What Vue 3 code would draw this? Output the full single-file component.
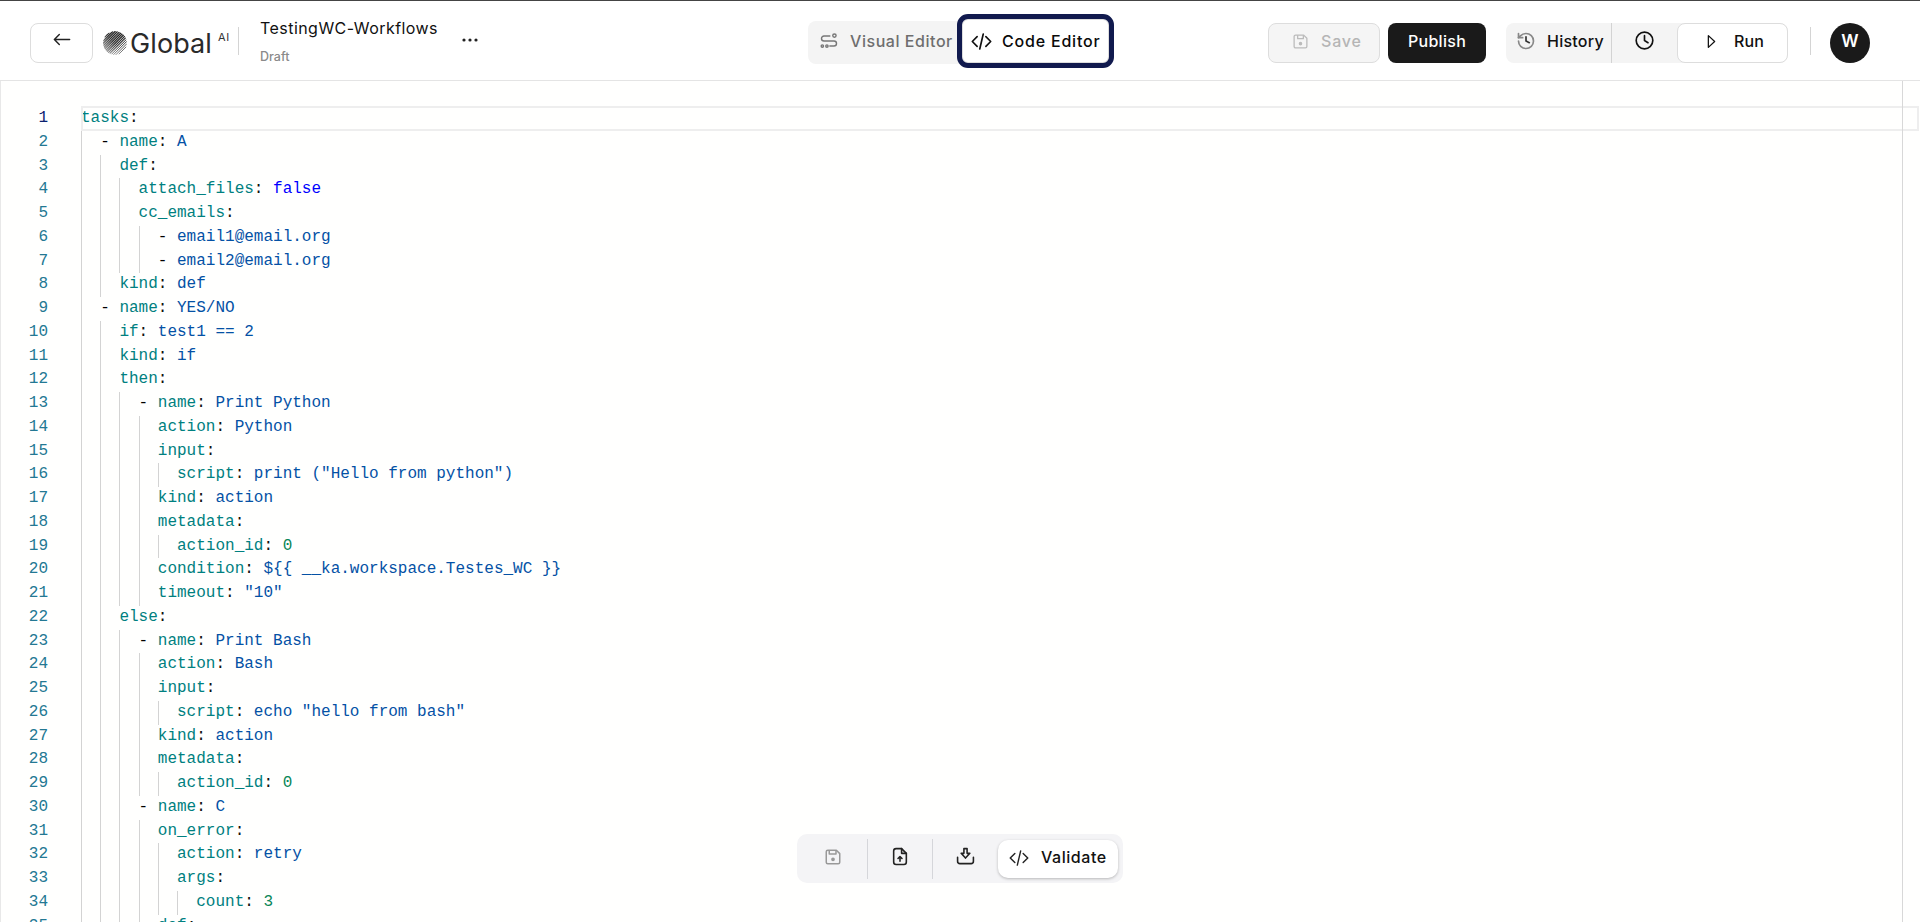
<script setup>
const source = `tasks:
  - name: A
    def:
      attach_files: false
      cc_emails:
        - email1@email.org
        - email2@email.org
    kind: def
  - name: YES/NO
    if: test1 == 2
    kind: if
    then:
      - name: Print Python
        action: Python
        input:
          script: print ("Hello from python")
        kind: action
        metadata:
          action_id: 0
        condition: \${{ __ka.workspace.Testes_WC }}
        timeout: "10"
    else:
      - name: Print Bash
        action: Bash
        input:
          script: echo "hello from bash"
        kind: action
        metadata:
          action_id: 0
      - name: C
        on_error:
          action: retry
          args:
            count: 3
        def:`

const colWidth = 9.6

const lines = source.split('\n').map((text, i) => {
  const m = text.match(/^( *)(- )?([^:]*:)?(.*)$/)
  const indent = m[1].length
  const raw = (m[4] || '').trim()
  let kind = 'str'
  if (/^\d+$/.test(raw)) kind = 'num'
  else if (/^(true|false)$/.test(raw)) kind = 'bool'
  const guides = []
  for (let g = 0; g < Math.floor(indent / 2); g++) guides.push(g * 2 * colWidth)
  return {
    n: i + 1,
    lead: m[1],
    dash: m[2] || '',
    key: m[3] ? m[3].slice(0, -1) + ':' : '',
    value: raw,
    kind,
    guides
  }
})

// hatch strokes of the logo orb: "/" diagonals, one every 1.7 units
const hatch = []
for (let d = -11.5; d <= 11.5; d += 1.7) {
  const half = Math.sqrt(144 - d * d)
  const c = 12 + d * Math.SQRT1_2
  const e = 12 + d * Math.SQRT1_2
  hatch.push({
    x1: c - half * Math.SQRT1_2,
    y1: e + half * Math.SQRT1_2,
    x2: c + half * Math.SQRT1_2,
    y2: e - half * Math.SQRT1_2,
    w: 1.35 - Math.max(0, (d + 11.5) / 23 - 0.45) * 1.3
  })
}
</script>

<template>
  <div class="page">
    <header class="top">
      <div class="left">
        <button class="back" aria-label="Back">
          <svg viewBox="0 0 20 14" width="18" height="13" fill="none" stroke="#222" stroke-width="1.6" stroke-linecap="round" stroke-linejoin="round"><path d="M18.5 7H1.5M7 1.5 1.5 7 7 12.5"/></svg>
        </button>
        <div class="logo">
          <svg class="orb" viewBox="0 0 24 24" width="24" height="24">
            <defs>
              <linearGradient id="fade" x1="0.85" y1="0.15" x2="0.15" y2="0.85">
                <stop offset="0" stop-color="#fff"/>
                <stop offset="0.5" stop-color="#eee"/>
                <stop offset="1" stop-color="#777"/>
              </linearGradient>
              <mask id="orbmask"><circle cx="12" cy="12" r="12" fill="url(#fade)"/></mask>
            </defs>
            <g mask="url(#orbmask)" stroke="#222">
              <line v-for="(h, i) in hatch" :key="i" :x1="h.x1" :y1="h.y1" :x2="h.x2" :y2="h.y2" :stroke-width="h.w"/>
            </g>
          </svg>
          <span class="word">Global</span><sup class="ai">AI</sup>
        </div>
        <span class="vr logo-vr"></span>
        <div class="title">
          <div class="name">TestingWC-Workflows</div>
          <div class="draft">Draft</div>
        </div>
        <svg class="dots" viewBox="0 0 16 4" width="16" height="4" fill="#222"><circle cx="2" cy="2" r="1.6"/><circle cx="8" cy="2" r="1.6"/><circle cx="14" cy="2" r="1.6"/></svg>
      </div>

      <div class="center">
        <div class="seg">
          <button class="seg-btn">
            <svg viewBox="0 0 24 24" width="20" height="20" fill="none" stroke="#777" stroke-width="1.7" stroke-linecap="round"><path d="M13 6H6a3 3 0 0 0 0 6h12a3 3 0 0 1 0 6h-5"/><circle cx="18.5" cy="5.5" r="2"/><circle cx="4" cy="18" r="1.4"/><circle cx="9.5" cy="18" r="1.4"/></svg>
            <span>Visual Editor</span>
          </button>
          <button class="seg-btn active">
            <svg viewBox="0 0 24 24" width="21" height="21" fill="none" stroke="#111" stroke-width="1.9" stroke-linecap="round" stroke-linejoin="round"><path d="M7 6.5 1.5 12 7 17.5M17 6.5l5.5 5.5-5.5 5.5M14 3.5l-4 17"/></svg>
            <span>Code Editor</span>
          </button>
        </div>
      </div>

      <div class="right">
        <button class="save">
          <svg viewBox="0 0 24 24" width="17" height="17" fill="none" stroke="#bbb" stroke-width="1.8" stroke-linejoin="round"><path d="M5 3h11.5L21 7.5V19a2 2 0 0 1-2 2H5a2 2 0 0 1-2-2V5a2 2 0 0 1 2-2z"/><path d="M8 3v5h8V3"/><circle cx="12" cy="15" r="1.6" fill="#bbb"/></svg>
          <span>Save</span>
        </button>
        <button class="publish">Publish</button>
        <div class="runbar">
          <button class="hist">
            <svg viewBox="0 0 24 24" width="20" height="20" fill="none" stroke="#888" stroke-width="2" stroke-linecap="round" stroke-linejoin="round"><path d="M3 12a9 9 0 1 0 9-9 9.75 9.75 0 0 0-6.74 2.74L3 8"/><path d="M3 3v5h5"/><path d="M12 7v5l4 2" stroke="#333"/></svg>
            <span>History</span>
          </button>
          <button class="clock" aria-label="Schedule">
            <svg viewBox="0 0 24 24" width="21" height="21" fill="none" stroke="#111" stroke-width="1.9" stroke-linecap="round" stroke-linejoin="round"><circle cx="12" cy="12" r="9.5"/><path d="M12 6.5V12l4 2.5"/></svg>
          </button>
          <button class="run">
            <svg viewBox="0 0 10 16" width="9" height="15" fill="none" stroke="#111" stroke-width="1.4" stroke-linejoin="round"><path d="M1.5 1.5 8.5 8l-7 6.5z"/></svg>
            <span>Run</span>
          </button>
        </div>
        <span class="vr run-vr"></span>
        <div class="avatar">W</div>
      </div>
    </header>

    <main class="editor">
      <div v-for="l in lines" :key="l.n" class="row" :class="{ current: l.n === 1 }">
        <span class="num">{{ l.n }}</span>
        <span class="code">
          <i v-for="g in l.guides" :key="g" class="guide" :style="{ left: g + 'px' }"></i>
          <span>{{ l.lead + l.dash }}</span><span v-if="l.key" class="t-key">{{ l.key.slice(0, -1) }}</span><span v-if="l.key" class="t-dash">{{ ':' + (l.value ? ' ' : '') }}</span><span :class="'t-' + l.kind">{{ l.value }}</span>
        </span>
      </div>
      <div class="ruler"></div>

      <div class="tools">
        <button class="tool first">
          <svg viewBox="0 0 24 24" width="18" height="18" fill="none" stroke="#999" stroke-width="2" stroke-linejoin="round"><path d="M5 3h11.5L21 7.5V19a2 2 0 0 1-2 2H5a2 2 0 0 1-2-2V5a2 2 0 0 1 2-2z"/><path d="M7 3v5h9V3"/><circle cx="12" cy="15" r="1.5" fill="#999"/></svg>
        </button>
        <span class="tool-vr"></span>
        <button class="tool">
          <svg viewBox="0 0 20 24" width="16" height="19" fill="none" stroke="#222" stroke-width="2" stroke-linecap="round" stroke-linejoin="round"><path d="M12 2H5a3 3 0 0 0-3 3v14a3 3 0 0 0 3 3h10a3 3 0 0 0 3-3V8z"/><path d="M12 2v6h6"/><path d="M10 18v-6M7.5 14.5 10 12l2.5 2.5"/></svg>
        </button>
        <span class="tool-vr"></span>
        <button class="tool">
          <svg viewBox="0 0 24 24" width="19" height="19" fill="none" stroke="#222" stroke-width="2" stroke-linecap="round" stroke-linejoin="round"><path d="M10 2h4v6h3.5L12 14 6.5 8H10z"/><path d="M2 13v5a3 3 0 0 0 3 3h14a3 3 0 0 0 3-3v-5"/></svg>
        </button>
        <button class="validate">
          <svg viewBox="0 0 24 24" width="20" height="20" fill="none" stroke="#222" stroke-width="1.7" stroke-linecap="round" stroke-linejoin="round"><path d="M7 6.5 1.5 12 7 17.5M17 6.5l5.5 5.5-5.5 5.5M14 3.5l-4 17"/></svg>
          <span>Validate</span>
        </button>
      </div>
    </main>
  </div>
</template>

<style>
html, body { margin: 0; background: #fff; }
</style>

<style scoped>
.page {
  height: 922px;
  overflow: hidden;
  display: flex;
  flex-direction: column;
  font-family: Inter, "Noto Sans", sans-serif;
  color: #111;
  background: #fff;
}
button {
  font: inherit;
  color: inherit;
  border: 0;
  background: none;
  padding: 0;
  display: inline-flex;
  align-items: center;
}

.top {
  box-sizing: border-box;
  height: 81px;
  flex: none;
  padding-top: 4px;
  border-top: 1px solid #444;
  border-bottom: 1px solid #e4e4e4;
  display: grid;
  grid-template-columns: 808px 460px 1fr;
  align-items: center;
}
.left { display: flex; align-items: center; padding-left: 30px; }
.back {
  box-sizing: border-box;
  width: 63px;
  height: 40px;
  padding-bottom: 6px;
  justify-content: center;
  border: 1px solid #ddd;
  border-radius: 8px;
}
.logo { display: flex; align-items: center; margin-left: 10px; width: 135px; }
.orb { flex: none; }
.word { font-size: 27px; color: #2a2a2a; margin: 2px 0 0 3px; letter-spacing: .1px; line-height: 1; }
.ai { font-size: 11px; letter-spacing: .6px; margin: -10px 0 0 6px; color: #333; line-height: 1; }
.vr { width: 1px; height: 28px; background: #d4d4d4; flex: none; }
.logo-vr { margin-bottom: 3px; }
.title { margin: 0 0 3px 21px; width: 202px; }
.name { font-size: 16px; line-height: 20px; letter-spacing: .45px; }
.draft { font-size: 12.5px; line-height: 16px; margin-top: 11px; color: #8a8a8a; font-weight: 500; }
.dots { flex: none; margin-bottom: 6px; }

.center { display: flex; }
.seg {
  display: flex;
  align-items: center;
  height: 43px;
  width: 301px;
  background: #f4f4f4;
  border-radius: 8px;
}
.seg-btn {
  height: 43px;
  padding-bottom: 3px;
  font-size: 16px;
  font-weight: 450;
  letter-spacing: .55px;
  color: #6e6e6e;
  gap: 11px;
  padding-left: 11px;
  white-space: nowrap;
  box-sizing: border-box;
}
.seg-btn:first-child { width: 154px; }
.seg-btn.active {
  align-self: flex-start;
  margin-top: -2px;
  width: 147px;
  height: 44px;
  padding-bottom: 0;
  padding-left: 8px;
  letter-spacing: .8px;
  color: #0a0a0a;
  background: #fff;
  border-radius: 6px;
  border: 1px solid #ddd;
  outline: 5px solid #111a4e;
  gap: 10px;
}

.right { display: flex; align-items: center; padding-left: 0; }
.save {
  box-sizing: border-box;
  width: 112px;
  height: 40px;
  padding: 0 0 3px 23px;
  gap: 12px;
  border: 1px solid #ddd;
  border-radius: 8px;
  background: #f5f5f5;
  color: #b5b5b5;
  font-size: 16px;
  letter-spacing: .8px;
  font-weight: 450;
}
.publish {
  box-sizing: border-box;
  width: 98px;
  height: 40px;
  padding-bottom: 3px;
  margin-left: 8px;
  justify-content: center;
  background: #1a1a1a;
  color: #fff;
  border-radius: 8px;
  font-size: 16px;
  letter-spacing: .3px;
  font-weight: 550;
}
.runbar {
  display: flex;
  align-items: center;
  height: 40px;
  width: 282px;
  margin-left: 20px;
  background: #f4f4f4;
  border-radius: 8px;
}
.hist {
  box-sizing: border-box;
  width: 106px;
  height: 40px;
  padding: 0 0 3px 10px;
  gap: 11px;
  border-right: 1px solid #d3d3d3;
  font-size: 16px;
  letter-spacing: .25px;
  font-weight: 450;
}
.clock { box-sizing: border-box; width: 65px; height: 40px; padding-bottom: 5px; justify-content: center; }
.run {
  box-sizing: border-box;
  flex: 1;
  height: 40px;
  padding: 0 0 3px 29px;
  gap: 18px;
  background: #fff;
  border: 1px solid #ddd;
  border-radius: 8px;
  font-size: 16px;
  letter-spacing: .1px;
  font-weight: 450;
}
.run-vr { margin: 0 0 3px 22px; }
.avatar {
  box-sizing: border-box;
  width: 40px;
  height: 40px;
  padding-bottom: 3px;
  margin-left: 19px;
  border-radius: 50%;
  background: #1a1a1a;
  color: #fff;
  display: flex;
  align-items: center;
  justify-content: center;
  font-size: 17px;
  font-weight: 600;
}

.editor {
  position: relative;
  flex: 1;
  min-height: 0;
  overflow: hidden;
  box-sizing: border-box;
  padding-top: 26px;
  border-left: 1px solid #e8e8e8;
  background: #fffffe;
  font-family: "Liberation Mono", monospace;
  font-size: 16px;
  line-height: 23.76px;
}
.row { display: flex; height: 23.76px; }
.num {
  flex: none;
  width: 47px;
  margin-right: 33px;
  text-align: right;
  color: #237893;
}
.current .num { color: #0b216f; }
.code {
  position: relative;
  flex: 1;
  white-space: pre;
  color: #000;
}
.current .code::before {
  content: "";
  position: absolute;
  inset: -1px 1px 0 0;
  border: 2px solid #eeeeee;
}
.guide {
  position: absolute;
  top: 0;
  bottom: 0;
  width: 1px;
  background: #d3d3d3;
}
.t-key { color: #008080; }
.t-dash { color: #111; }
.t-str { color: #0451a5; }
.t-bool { color: #0000ff; }
.t-num { color: #098658; }
.ruler {
  position: absolute;
  top: 0;
  bottom: 0;
  left: 1901px;
  width: 1px;
  background: #d8d8d8;
}

.tools {
  position: absolute;
  left: 796px;
  top: 753px;
  box-sizing: border-box;
  width: 326px;
  height: 49px;
  display: flex;
  align-items: center;
  background: #f4f4f6;
  border-radius: 10px;
  font-family: Inter, "Noto Sans", sans-serif;
}
.tool { box-sizing: border-box; justify-content: center; flex: none; width: 64px; height: 40px; padding-bottom: 4px; }
.tool.first { width: 70px; padding-left: 2px; }
.tool-vr { width: 1px; height: 40px; background: #d5d6da; flex: none; }
.validate {
  box-sizing: border-box;
  flex: none;
  width: 120px;
  height: 38px;
  margin-left: 1px;
  padding: 0 0 2px 11px;
  gap: 12px;
  background: #fff;
  border-radius: 10px;
  box-shadow: 0 1px 3px rgba(0,0,0,.25);
  font-size: 16px;
  letter-spacing: .55px;
  font-weight: 450;
}
</style>
